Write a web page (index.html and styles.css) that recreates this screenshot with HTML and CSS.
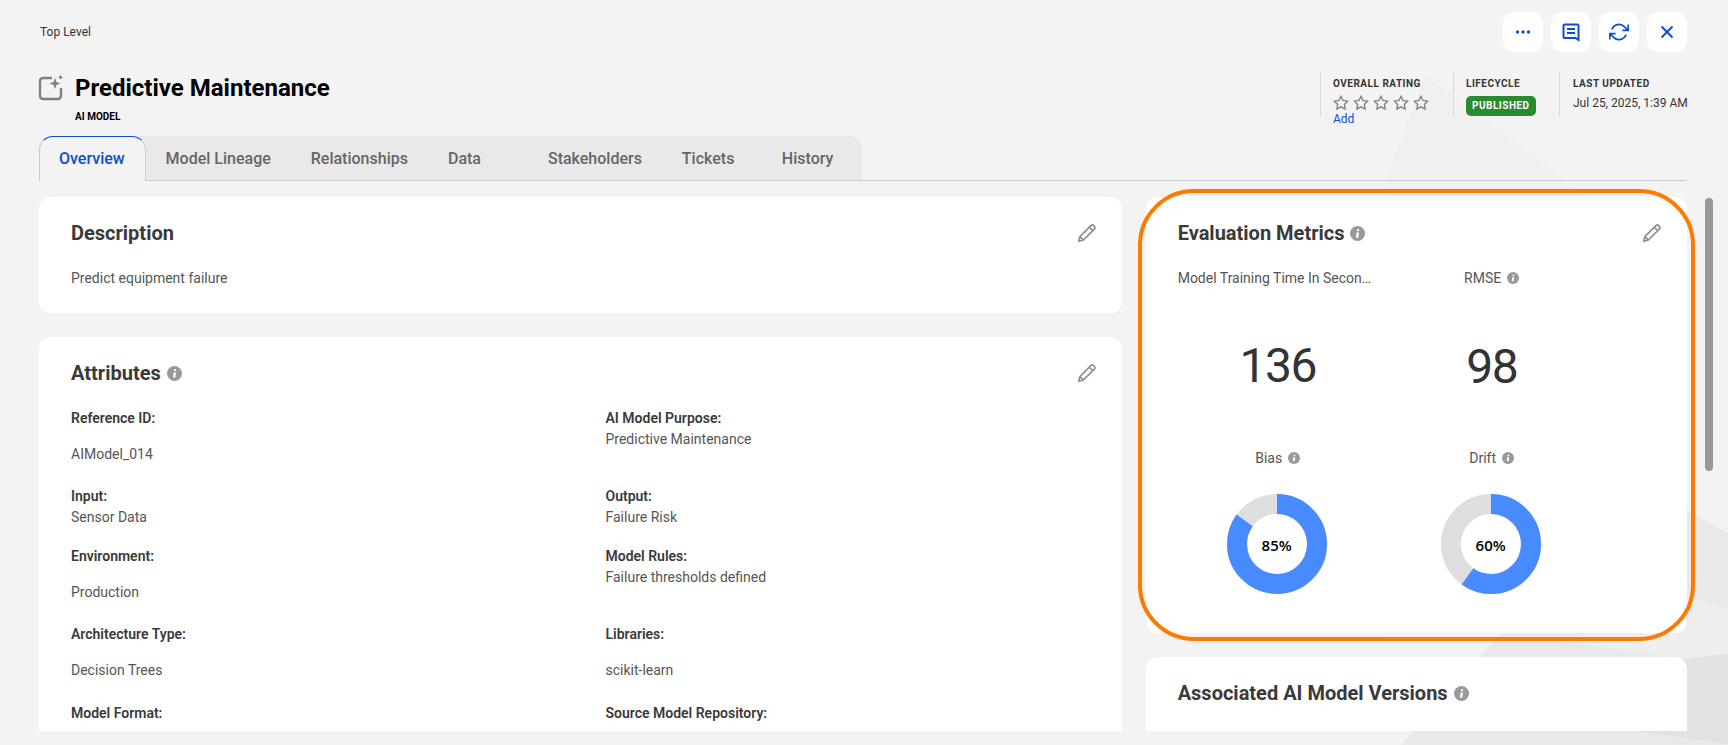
FILE: index.html
```html
<!DOCTYPE html>
<html lang="en">
<head>
    <meta charset="UTF-8">
    <title>Predictive Maintenance</title>
    <link rel="stylesheet" href="styles.css">
</head>
<body>
    <!-- faint shapes behind the page -->
    <svg class="backdrop" viewBox="0 0 1728 745" aria-hidden="true">
        <polygon points="1426,75 1600,205 1600,633 1385,633 1385,180" fill="#f0f0f0"/>
        <polygon points="1478,657 1510,625 1688,510 1728,532 1728,745 1400,745" fill="#e9e9e9"/>
        <polygon points="1560,640 1693,597 1728,608 1728,653 1683,658" fill="#eeeeee"/>
        <polygon points="1683,658 1728,653 1728,743 1640,731" fill="#e2e2e2"/>
    </svg>

    <svg class="sprite" aria-hidden="true">
        <symbol id="info" viewBox="0 0 16 16">
            <circle cx="8" cy="8" r="8" fill="#999"/>
            <circle cx="8.6" cy="4.5" r="1.2" fill="#fff"/>
            <polygon points="7,7 9.6,7 8.8,12.4 6.4,12.4" fill="#fff"/>
        </symbol>
        <symbol id="pencil" viewBox="0 0 24 24">
            <path d="M3 21l1.2-5L16.5 3.7a1.8 1.8 0 0 1 2.5 0l1.3 1.3a1.8 1.8 0 0 1 0 2.5L8 19.8z M14.5 5.7l3.8 3.8 M4.2 16L8 19.8" fill="none" stroke="#8c8c8c" stroke-width="1.7"/>
        </symbol>
        <symbol id="star" viewBox="0 0 24 24">
            <polygon points="12 2 15.09 8.26 22 9.27 17 14.14 18.18 21.02 12 17.77 5.82 21.02 7 14.14 2 9.27 8.91 8.26" fill="none" stroke="#808080" stroke-width="2"/>
        </symbol>
    </svg>

    <header class="topbar">
        <span class="crumb">Top Level</span>
        <div class="actions">
            <button class="action">
                <svg width="16" height="16" viewBox="0 0 16 16"><circle cx="2.5" cy="8" r="1.7"/><circle cx="8" cy="8" r="1.7"/><circle cx="13.5" cy="8" r="1.7"/></svg>
            </button>
            <button class="action">
                <svg class="line-icon" width="20" height="20" viewBox="0 0 20 20"><path d="M3.5 2.5h13a1 1 0 0 1 1 1v14.5l-3-2H3.500a1 1 0 0 1-1-1v-11.500a1 1 0 0 1 1-1z M6 7h8 M6 11h8"/></svg>
            </button>
            <button class="action">
                <svg class="line-icon" width="20" height="20" viewBox="0 0 24 24"><path d="M23 3v7h-7 M1 21v-7h7 M3.500 9a9 9 0 0 1 14.900-3.400L23 10 M1 14l4.600 4.400A9 9 0 0 0 20.500 15"/></svg>
            </button>
            <button class="action">
                <svg class="line-icon" width="16" height="16" viewBox="0 0 16 16"><path d="M2.500 2.500l11 11 M13.500 2.500l-11 11"/></svg>
            </button>
        </div>
    </header>

    <section class="heading">
        <svg class="model-icon" width="24" height="24" viewBox="0 0 24 24">
            <path d="M13 2H4a3 3 0 0 0-3 3v15a3 3 0 0 0 3 3h15a3 3 0 0 0 3-3V12" fill="none" stroke="#808080" stroke-width="2.400"/>
            <path d="M16 2l1.500 4 4 1.500-4 1.500-1.500 4-1.500-4-4-1.500 4-1.500z" fill="#808080"/>
            <path d="M21.500 -1.500l.8 2 2 .8-2 .8-.8 2-.8-2-2-.8 2-.8z" fill="#808080"/>
        </svg>
        <div class="title-block">
            <h1>Predictive Maintenance</h1>
            <div class="subtitle">AI MODEL</div>
        </div>
        <div class="meta">
            <div class="meta-item rating">
                <div class="meta-label">OVERALL RATING</div>
                <div class="stars">
                    <svg><use href="#star"/></svg><svg><use href="#star"/></svg><svg><use href="#star"/></svg><svg><use href="#star"/></svg><svg><use href="#star"/></svg>
                </div>
                <a class="add-link">Add</a>
            </div>
            <div class="meta-item lifecycle">
                <div class="meta-label">LIFECYCLE</div>
                <span class="badge">PUBLISHED</span>
            </div>
            <div class="meta-item updated">
                <div class="meta-label">LAST UPDATED</div>
                <div class="meta-value">Jul 25, 2025, 1:39 AM</div>
            </div>
        </div>
    </section>

    <nav class="tabs">
        <div class="tab-bar">
            <a class="tab active">Overview</a>
            <a class="tab">Model Lineage</a>
            <a class="tab">Relationships</a>
            <a class="tab">Data</a>
            <a class="tab">Stakeholders</a>
            <a class="tab">Tickets</a>
            <a class="tab">History</a>
        </div>
    </nav>

    <main class="content">
        <div class="column">
            <section class="card description">
                <div class="card-head">
                    <h2>Description</h2>
                    <svg class="edit"><use href="#pencil"/></svg>
                </div>
                <p class="value">Predict equipment failure</p>
            </section>

            <section class="card">
                <div class="card-head">
                    <h2>Attributes <svg class="info"><use href="#info"/></svg></h2>
                    <svg class="edit"><use href="#pencil"/></svg>
                </div>
                <div class="attributes">
                    <div><div class="label">Reference ID:</div><div class="value spaced">AIModel_014</div></div>
                    <div><div class="label">AI Model Purpose:</div><div class="value">Predictive Maintenance</div></div>
                    <div><div class="label">Input:</div><div class="value">Sensor Data</div></div>
                    <div><div class="label">Output:</div><div class="value">Failure Risk</div></div>
                    <div><div class="label">Environment:</div><div class="value spaced">Production</div></div>
                    <div><div class="label">Model Rules:</div><div class="value">Failure thresholds defined</div></div>
                    <div><div class="label">Architecture Type:</div><div class="value spaced">Decision Trees</div></div>
                    <div><div class="label">Libraries:</div><div class="value spaced">scikit-learn</div></div>
                    <div><div class="label">Model Format:</div></div>
                    <div><div class="label">Source Model Repository:</div></div>
                </div>
            </section>
        </div>

        <div class="column">
            <section class="card metrics-card">
                <div class="card-head">
                    <h2>Evaluation Metrics <svg class="info"><use href="#info"/></svg></h2>
                    <svg class="edit"><use href="#pencil"/></svg>
                </div>
                <div class="metrics">
                    <div class="metric">
                        <div class="metric-label wide">Model Training Time In Secon…</div>
                        <div class="metric-number">136</div>
                    </div>
                    <div class="metric rmse">
                        <div class="metric-label">RMSE <svg class="info small"><use href="#info"/></svg></div>
                        <div class="metric-number">98</div>
                    </div>
                    <div class="metric">
                        <div class="metric-label">Bias <svg class="info small"><use href="#info"/></svg></div>
                        <div class="donut">
                            <svg viewBox="0 0 100 100">
                                <circle class="donut-rest" cx="50" cy="50" r="40"/>
                                <circle class="donut-fill" cx="50" cy="50" r="40" pathLength="100" stroke-dasharray="85 15"/>
                            </svg>
                            <span>85%</span>
                        </div>
                    </div>
                    <div class="metric">
                        <div class="metric-label">Drift <svg class="info small"><use href="#info"/></svg></div>
                        <div class="donut">
                            <svg viewBox="0 0 100 100">
                                <circle class="donut-rest" cx="50" cy="50" r="40"/>
                                <circle class="donut-fill" cx="50" cy="50" r="40" pathLength="100" stroke-dasharray="60 40"/>
                            </svg>
                            <span>60%</span>
                        </div>
                    </div>
                </div>
                <div class="highlight"></div>
            </section>

            <section class="card versions">
                <div class="card-head">
                    <h2>Associated AI Model Versions <svg class="info"><use href="#info"/></svg></h2>
                </div>
            </section>
        </div>
    </main>

    <div class="scroll-thumb"></div>
</body>
</html>
```

FILE: styles.css
```css
html, body {
    margin: 0;
    height: 745px;
    overflow: hidden;
}
body {
    position: relative;
    background: #f3f3f3;
    border-top: 1px solid #eeeeee;
    box-sizing: border-box;
    font-family: Roboto, "Liberation Sans", sans-serif;
    color: #333;
}
.backdrop {
    position: absolute;
    top: 0;
    left: 0;
    width: 1728px;
    height: 745px;
    z-index: -1;
}
.sprite {
    display: none;
}

/* top row */
.topbar {
    display: flex;
    justify-content: space-between;
    align-items: center;
    margin-top: 11px;
    padding: 0 41px 0 40px;
}
.crumb {
    font-size: 12px;
    color: #333;
}
.actions {
    display: flex;
    gap: 8px;
}
.action {
    width: 40px;
    height: 40px;
    padding: 0;
    border: none;
    border-radius: 12px;
    background: white;
    display: flex;
    align-items: center;
    justify-content: center;
    fill: #0b4fd0;
}
.line-icon {
    fill: none;
    stroke: #0b4fd0;
    stroke-width: 2;
}

/* title and meta */
.heading {
    display: flex;
    align-items: flex-start;
    height: 84px;
    padding: 20px 41px 0 39px;
    box-sizing: border-box;
}
.model-icon {
    margin-top: 4px;
    margin-right: 12px;
    overflow: visible;
}
.title-block {
    flex: 1;
}
h1 {
    margin: 2px 0 0;
    font-size: 24px;
    line-height: 28px;
    font-weight: 700;
    color: #000;
}
.subtitle {
    margin-top: 8px;
    font-size: 10px;
    line-height: 14px;
    font-weight: 700;
    color: #000;
}
.meta {
    display: flex;
}
.meta-item {
    height: 44px;
    padding-left: 12px;
    border-left: 1px solid #d8d8d8;
    box-sizing: border-box;
}
.rating {
    width: 133px;
}
.lifecycle {
    width: 106px;
}
.updated {
    width: 128px;
    padding-left: 13px;
    white-space: nowrap;
}
.meta-label {
    margin-top: 6px;
    font-size: 10px;
    line-height: 12px;
    font-weight: 700;
    letter-spacing: 0.5px;
    color: #333;
}
.stars {
    display: flex;
    gap: 4px;
    height: 16px;
    margin-top: 5px;
}
.stars svg {
    width: 16px;
    height: 16px;
}
.add-link {
    display: block;
    margin-top: 1px;
    font-size: 12px;
    line-height: 14px;
    color: #0b4fd0;
}
.badge {
    display: inline-block;
    margin-top: 6px;
    padding: 0 6px;
    height: 20px;
    line-height: 20px;
    border-radius: 5px;
    background: #2a8a2f;
    color: white;
    font-size: 10px;
    font-weight: 700;
    letter-spacing: 0.5px;
}
.meta-value {
    margin-top: 5px;
    font-size: 12px;
    line-height: 16px;
    color: #333;
}

/* tabs */
.tabs {
    margin: 0 41px 0 39px;
    border-bottom: 1px solid #cccccc;
    display: flex;
}
.tab-bar {
    display: flex;
    height: 44px;
    background: #e9e9e9;
    border-radius: 14px 12px 0 0;
}
.tab {
    min-width: 100px;
    padding: 0 20px;
    box-sizing: border-box;
    font-size: 16px;
    font-weight: 500;
    line-height: 45px;
    color: #666;
}
.tab.active {
    margin-bottom: -1px;
    min-width: 106.600px;
    height: 45px;
    line-height: 44px;
    padding: 0 19px;
    background: #f3f3f3;
    border: 1px solid #cccccc;
    border-top-color: #0b4fd0;
    border-bottom: none;
    border-radius: 14px 14px 0 0;
    color: #0b4fd0;
}

/* cards */
.content {
    display: grid;
    grid-template-columns: 2fr 1fr;
    gap: 24px;
    height: 550px;
    margin: 0 32px 0 39px;
    padding: 16px 9px 0 0;
    box-sizing: border-box;
    overflow: hidden;
}
.column {
    display: flex;
    flex-direction: column;
    gap: 24px;
}
.card {
    position: relative;
    background: white;
    border-radius: 12px;
    padding: 24px 32px;
}
.description {
    height: 116px;
    box-sizing: border-box;
}
.versions {
    min-height: 200px;
}
.card-head {
    display: flex;
    justify-content: space-between;
    align-items: center;
    height: 24px;
}
h2 {
    margin: 0;
    font-size: 20px;
    line-height: 24px;
    font-weight: 700;
    color: #3a3a3a;
    display: flex;
    align-items: center;
    gap: 6px;
}
.info {
    width: 15px;
    height: 15px;
}
.info.small {
    width: 12px;
    height: 12px;
    margin-left: 2px;
}
.edit {
    width: 22px;
    height: 22px;
    margin-right: -8px;
}
.description .value {
    margin: 23px 0 0;
}
.value {
    font-size: 14px;
    line-height: 20px;
    color: #555;
    margin-top: 1px;
    margin-bottom: 1px;
}
.value.spaced {
    margin-top: 16px;
    margin-bottom: 4px;
}
.label {
    font-size: 14px;
    line-height: 20px;
    font-weight: 600;
    color: #3a3a3a;
}
.attributes {
    display: grid;
    grid-template-columns: 534.500px 1fr;
    row-gap: 18.250px;
    margin-top: 22.500px;
}

/* metrics */
.metrics-card {
    height: 436px;
    box-sizing: border-box;
}
.metrics {
    display: grid;
    grid-template-columns: 214px 214px;
    grid-template-rows: 180px 1fr;
    margin: 23px 0 0 -7px;
}
.metric {
    display: flex;
    flex-direction: column;
    align-items: center;
}
.metric-label {
    display: flex;
    align-items: center;
    gap: 4px;
    height: 20px;
    font-size: 14px;
    line-height: 20px;
    color: #555;
}
.metric-label.wide {
    width: 200px;
    white-space: nowrap;
}
.metric-number {
    margin-top: 46px;
    font-size: 48px;
    line-height: 64px;
    letter-spacing: -1.500px;
    color: #333;
}
.rmse .metric-number {
    margin-top: 47px;
}
.donut {
    position: relative;
    width: 100px;
    height: 100px;
    margin-top: 26px;
    margin-right: 2px;
}
.donut svg {
    display: block;
    width: 100px;
    height: 100px;
    transform: rotate(-90deg);
}
.donut circle {
    fill: none;
    stroke-width: 20;
}
.donut-rest {
    stroke: #dedede;
}
.donut-fill {
    stroke: #488aff;
}
.donut span {
    position: absolute;
    top: 1px;
    left: 0;
    right: 0;
    line-height: 100px;
    text-align: center;
    font-family: "Open Sans", sans-serif;
    font-size: 15px;
    font-weight: 600;
    color: #000;
}

/* orange callout around the metrics card */
.highlight {
    position: absolute;
    top: -8px;
    left: -8px;
    right: -8px;
    bottom: -8px;
    border: 4px solid #ff7a00;
    border-radius: 56px;
}
.scroll-thumb {
    position: absolute;
    top: 197px;
    left: 1705px;
    width: 8px;
    height: 273px;
    border-radius: 4px;
    background: #999;
}
```
